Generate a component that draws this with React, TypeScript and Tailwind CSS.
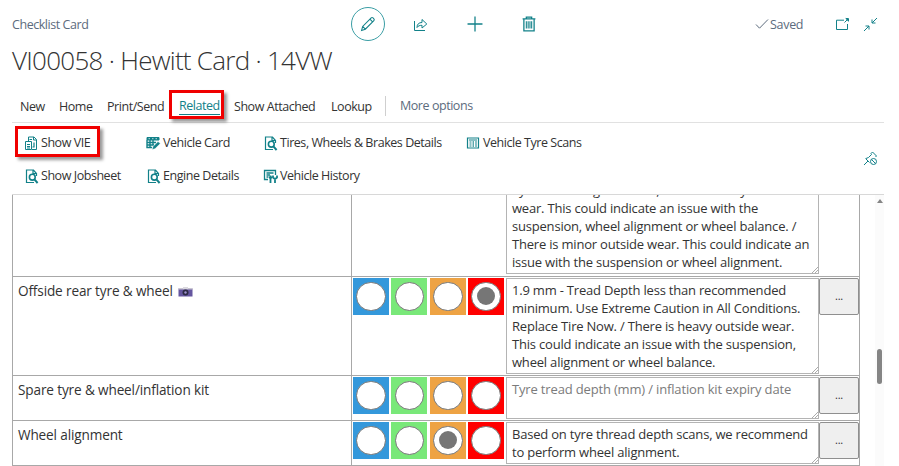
import type { ReactNode } from "react";

const tabs = ["New", "Home", "Print/Send", "Related", "Show Attached", "Lookup"];
const tabWidths = ["w-[39px]", "w-[48px]", "w-[72px]", "w-[55px]", "w-[97px]", "w-[40px]"];

function Svg({ size = "size-[15px]", children }: { size?: string; children: ReactNode }) {
  return (
    <svg viewBox="0 0 15 15" className={`shrink-0 ${size}`} fill="none" stroke="#128189" strokeWidth="1">
      {children}
    </svg>
  );
}

function DocSearch() {
  return (
    <Svg>
      <path d="M5 13.5H2.5V1H9.5L12.5 4.5V7M9 1V4.5H12.5" strokeWidth="1.2" />
      <circle cx="8.3" cy="8.2" r="2.9" strokeWidth="1.6" />
      <path d="M10.4 10.4L13.6 14" strokeWidth="2" />
      <path d="M2 13.5H10" />
    </Svg>
  );
}

function DocPages() {
  return (
    <Svg>
      <path d="M4.5 5V1H10L12.5 3.5V13.5H8M9.5 1V4H12.5M1.5 5.5H7.5V13.5H1.5Z" />
      <path d="M3 8.5H6M3 10.5H6M3 12H6M5.5 3.5H8M10 6.5V11H8.5" strokeWidth="1.2" />
    </Svg>
  );
}

function GridEdit() {
  return (
    <Svg>
      <path d="M1 1.5H13V4H1Z" fill="#128189" />
      <path d="M1 4V11.5H6M1 6.5H10M1 9H8M4 3V11.5M7 3V9" strokeWidth="1.4" />
      <path d="M6 13.5L7 10.5L12 5.5L14.3 7.6L9 12.8Z" fill="#128189" stroke="white" strokeWidth=".5" />
      <path d="M2.5 2.7H4M6 2.7H7.5M9.5 2.7H11" stroke="white" strokeWidth=".7" />
    </Svg>
  );
}

function Tools() {
  return (
    <Svg>
      <path d="M5 10.5H1.5V1.5H12.5V6M3.5 4H10.5M3.5 6H7M3.5 8H5.5" strokeWidth="1.3" />
      <path d="M7.5 6.5V14M6 8.5H9" strokeWidth="1.8" />
      <path d="M10 6.5V8.5L12 10L14 8.5V6.5M12 10V14" strokeWidth="1.8" />
    </Svg>
  );
}

function ScanList() {
  return (
    <Svg>
      <path d="M1.5 2H12.5V12H1.5Z" strokeWidth="1.2" />
      <path d="M3 4H11M3.5 6H5.5M3.5 8H5.5M3.5 10H5.5M9 6H11M9 8H11M9 10H11M7.2 5V11" />
    </Svg>
  );
}

function Action({ icon, label, width }: { icon: ReactNode; label: string; width: string }) {
  return (
    <div className={`flex h-[33px] items-center gap-[2px] ${width}`}>
      {icon}
      <span>{label}</span>
    </div>
  );
}

function Radio({ color, checked }: { color: string; checked: boolean }) {
  return (
    <div className={`flex h-[36.5px] w-[36px] items-center justify-center ${color}`}>
      <div className="flex size-[29.5px] items-center justify-center rounded-full border border-[#767676] bg-white">
        {checked && <div className="size-[18px] rounded-full bg-[#767676]" />}
      </div>
    </div>
  );
}

function Camera() {
  return (
    <svg viewBox="0 0 15 10" className="mt-[2px] h-[10px] w-[15px]">
      <rect x=".5" y="1.5" width="14" height="8" fill="#65569f" />
      <rect x=".5" y="1" width="14" height="1.5" fill="#c9c6d2" />
      <rect x="5" y="0" width="5" height="2" fill="#dad8df" />
      <circle cx="7.5" cy="5.5" r="3" fill="#2d2a45" />
      <circle cx="7.5" cy="5.5" r="1.2" fill="#9d91cb" />
    </svg>
  );
}

interface RowProps {
  label: string;
  camera?: boolean;
  checked: number;
  height: string;
  lines: string[];
  muted?: boolean;
}

const colors = ["bg-[#3498db]", "bg-[#79e879]", "bg-[#eea344]", "bg-[#ff0000]"];

function Grip() {
  return (
    <svg viewBox="0 0 6 6" className="absolute right-0 bottom-0 size-[6px]" stroke="#888" strokeWidth=".7">
      <path d="M0 6L6 0M3 6L6 3" />
    </svg>
  );
}

function Row({ label, camera, checked, height, lines, muted }: RowProps) {
  return (
    <div className={`flex border-b border-[#a8a8a8] ${height}`}>
      <div className="flex w-[339px] items-start border-r border-[#a8a8a8] pt-[4px] pl-[5px]">
        <div className="flex items-center gap-[5px] text-[13.6px] leading-[19px] tracking-[-0.14px]">
          {label}
          {camera && <Camera />}
        </div>
      </div>
      <div className="flex w-[154px] gap-[2.4px] pt-px pl-px">
        {colors.map((c, i) => (
          <Radio key={c} color={c} checked={i === checked} />
        ))}
      </div>
      <div
        className={`relative mt-px mb-[1px] w-[313px] border border-[#b4b4b4] pt-[2px] pl-[5px] leading-[18px] whitespace-nowrap ${muted ? "tracking-[-0.16px] text-[#7b7b7b]" : ""}`}
      >
        {lines.map((l) => (
          <div key={l}>{l}</div>
        ))}
        <Grip />
      </div>
      <div className="mt-px flex h-[37px] w-[40px] items-center justify-center rounded-[2px] border border-[#8f8f8f] bg-[#efefef] text-[11px]">
        ...
      </div>
    </div>
  );
}

export default function App() {
  return (
    <div className="relative flex h-[466px] w-[899px] flex-col overflow-hidden bg-white font-['Open_Sans','Noto_Sans',sans-serif] text-[12.5px] text-[#333]">
      <header className="flex h-[48px] items-center pl-[12px] text-[#5c6b7d]">
        <span className="w-[339px] pt-[2px] tracking-[-0.45px]">Checklist Card</span>
        <div className="flex size-[34px] items-center justify-center rounded-full border border-[#3b9ea5]">
          <Svg size="size-[16px]">
            <path d="M1.5 13.5L2.5 9.8L10.5 1.8Q11.3 1 12.2 1.8L13 2.6Q13.8 3.5 13 4.3L5 12.4ZM9.3 3L11.8 5.5M2.5 9.8L5 12.4" />
          </Svg>
        </div>
        <div className="ml-[28px]">
          <Svg>
            <path d="M1.5 4V13.5H12M4 10.5C4 7 6 5.5 9 5.5V2.5L13.8 7L9 11V8.3C6.5 8.3 5 9 4 10.5Z" />
          </Svg>
        </div>
        <div className="ml-[39px]">
          <Svg size="size-[16px]">
            <path d="M7.5 .5V14.5M.5 7.5H14.5" strokeWidth="1.2" />
          </Svg>
        </div>
        <div className="ml-[38px]">
          <Svg size="size-[16px]">
            <path d="M1.5 2.7H13.5M5 2.5V1H10V2.5M2.7 3V14H12.3V3" strokeWidth="1.2" />
            <path d="M5 5V11.7M6.7 5V11.7M8.4 5V11.7M10 5V11.7" />
          </Svg>
        </div>
        <div className="ml-[218px] flex items-center gap-px">
          <svg viewBox="0 0 14 12" className="h-[12px] w-[14px]" fill="none" stroke="#5c6b7d">
            <path d="M1 6.5L4.5 10.2L13 1.5" />
          </svg>
          <span className="w-[34px] pt-[2px] tracking-[-0.3px]">Saved</span>
        </div>
        <div className="ml-[31px]">
          <Svg>
            <path d="M9 3.2H1.5V12.5H12.5V7" />
            <path d="M9.5 5.5L13 2M10.8 1.5H13.5V4.2Z" />
          </Svg>
        </div>
        <div className="ml-[13px]">
          <Svg>
            <path d="M14 1L9 6M9 2.5V6H12.5M1 14L6 9M2.5 9H6V12.5" />
          </Svg>
        </div>
      </header>

      <h1 className="mb-[13px] flex h-[25px] shrink-0 items-center pl-[12px] text-[26px] font-light tracking-[-0.73px] whitespace-nowrap">
        VI00058 · Hewitt Card · 14VW
      </h1>

      <nav className="mr-[15px] ml-[12px] flex h-[37px] shrink-0 items-center border-b border-[#e1e1e1] pt-[4px] pl-[8px] tracking-[-0.45px] whitespace-nowrap">
        {tabs.map((t, i) => (
          <span key={t} className={`relative flex h-[22px] items-center ${tabWidths[i]} ${t === "Related" ? "text-[#128189]" : ""}`}>
            <span className={t === "Related" ? "border-b border-[#128189] leading-[16px]" : "leading-[17px]"}>{t}</span>
            {t === "Related" && (
              <span className="absolute -top-[5px] -left-[10px] h-[29px] w-[55px] border-[3px] border-[#f00000] shadow-[3px_3px_3px_rgba(0,0,0,.4)]" />
            )}
          </span>
        ))}
        <span className="ml-[14px] h-[20px] border-l border-[#cfcfcf]" />
        <span className="ml-[14px] text-[#5c6b7d]">More options</span>
      </nav>

      <section className="flex h-[71px] shrink-0 items-center pt-[3px] pl-[24px] tracking-[-0.45px] whitespace-nowrap">
        <div className="flex flex-col">
          <div className="relative">
            <Action icon={<DocPages />} label="Show VIE" width="w-[122px]" />
            <div className="absolute -top-px -left-[9px] h-[31px] w-[85px] border-[3px] border-[#f00000] shadow-[3px_3px_3px_rgba(0,0,0,.4)]" />
          </div>
          <Action icon={<DocSearch />} label="Show Jobsheet" width="w-[122px]" />
        </div>
        <div>
          <Action icon={<GridEdit />} label="Vehicle Card" width="w-[117px]" />
          <Action icon={<DocSearch />} label="Engine Details" width="w-[117px]" />
        </div>
        <div>
          <Action icon={<DocSearch />} label="Tires, Wheels & Brakes Details" width="w-[203px]" />
          <Action icon={<Tools />} label="Vehicle History" width="w-[203px]" />
        </div>
        <div className="h-[66px]">
          <Action icon={<ScanList />} label="Vehicle Tyre Scans" width="w-[397px]" />
        </div>
        <div className="shrink-0 pb-[4px]">
          <Svg>
            <path d="M1 14L5 10M2.5 7.5L6.5 11.5M3 7.5L5.5 6.5L8.5 3.5L8 2.5L9.5 1L13.5 5L12.5 6" />
            <circle cx="10.5" cy="10.5" r="3" />
            <path d="M8.5 8.5L12.5 12.5" />
          </Svg>
        </div>
      </section>

      <main className="mr-[15px] ml-[12px] flex h-[272px] border-t border-[#d8d8d8]">
        <div className="h-[271px] w-[848px] overflow-hidden border-r border-l border-[#a8a8a8] text-[13px] tracking-[-0.2px]">
          <div className="flex h-[82px] border-b border-[#a8a8a8]">
            <div className="w-[339px] border-r border-[#a8a8a8]" />
            <div className="w-[154px]" />
            <div className="relative mb-[2px] flex w-[313px] flex-col justify-end border-r border-b border-l border-[#b4b4b4] pb-[2px] pl-[5px] leading-[18px] whitespace-nowrap">
              <div className="-mt-[14px]">Tyre is wearing on inside, There is heavy outside</div>
              <div>wear. This could indicate an issue with the</div>
              <div>suspension, wheel alignment or wheel balance. /</div>
              <div>There is minor outside wear. This could indicate an</div>
              <div>issue with the suspension or wheel alignment.</div>
              <Grip />
            </div>
          </div>
          <Row
            label="Offside rear tyre & wheel"
            camera
            checked={3}
            height="h-[99px]"
            lines={[
              "1.9 mm - Tread Depth less than recommended",
              "minimum. Use Extreme Caution in All Conditions.",
              "Replace Tire Now. / There is heavy outside wear.",
              "This could indicate an issue with the suspension,",
              "wheel alignment or wheel balance.",
            ]}
          />
          <Row
            label="Spare tyre & wheel/inflation kit"
            checked={-1}
            height="h-[45px]"
            lines={["Tyre tread depth (mm) / inflation kit expiry date"]}
            muted
          />
          <Row
            label="Wheel alignment"
            checked={2}
            height="h-[45px]"
            lines={["Based on tyre thread depth scans, we recommend", "to perform wheel alignment."]}
          />
        </div>
        <div className="ml-[15px] flex w-[9px] flex-col items-center bg-[#fbfbfb] pt-[4px]">
          <div className="h-0 w-0 border-x-[3px] border-b-[4px] border-x-transparent border-b-[#858585]" />
          <div className="mt-[146px] h-[35px] w-[5px] rounded-full bg-[#858585]" />
        </div>
      </main>
    </div>
  );
}
